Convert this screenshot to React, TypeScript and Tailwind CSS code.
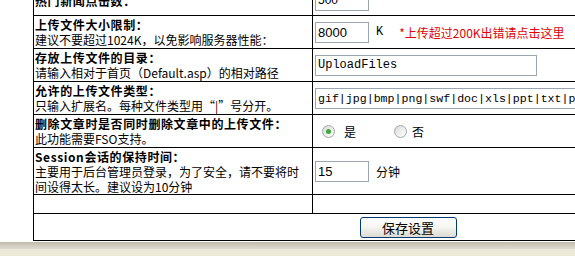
import React from "react";

const cjk = { fontFamily: '"Noto Sans CJK SC", "Liberation Sans", sans-serif' };
const mono = { fontFamily: '"Liberation Mono", "Noto Sans CJK SC", monospace' };
const sans = { fontFamily: '"Liberation Sans", "Noto Sans CJK SC", sans-serif' };

interface RowProps {
  title: string;
  desc?: React.ReactNode;
  height: string;
  children?: React.ReactNode;
  extra?: string;
}

const Row = ({ title, desc, height, children, extra = "" }: RowProps) => (
  <div className={`flex border-b border-black ${height} ${extra}`}>
    <div className="w-[279px] shrink-0 border-r border-black pl-[1px] flex flex-col justify-center whitespace-nowrap">
      {title && <div className="font-bold tracking-[0.6px]">{title}</div>}
      {desc && <div>{desc}</div>}
    </div>
    <div className="flex-1 pl-[2px] flex items-center">{children}</div>
  </div>
);

const TextBox = ({ value, w, font }: { value: string; w: string; font: React.CSSProperties }) => (
  <div
    className={`${w} h-[21px] shrink-0 border border-[#9aa7b2] bg-white pl-[2px] flex items-center overflow-hidden whitespace-nowrap text-black`}
    style={font}
  >
    {value}
  </div>
);

const Radio = ({ checked }: { checked?: boolean }) => (
  <span className="w-[13px] h-[13px] rounded-full border border-[#9ba6b0] bg-gradient-to-br from-[#dcdcd6] to-white flex items-center justify-center shrink-0">
    {checked && <span className="w-[5px] h-[5px] rounded-full bg-[#3ca93c]" />}
  </span>
);

export default function App() {
  return (
    <div className="w-[575px] h-[256px] overflow-hidden bg-white flex flex-col text-[12px] leading-[15px] text-black" style={cjk}>
      <div className="h-[242px] overflow-hidden shrink-0">
        <div className="ml-[33px] mt-[-14px] w-[749px] border-l border-black">
          <Row title="热门新闻点击数：" height="h-[30px]">
            <TextBox value="500" w="w-[54px]" font={sans} />
          </Row>
          <Row title="上传文件大小限制：" desc="建议不要超过1024K，以免影响服务器性能：" height="h-[33px]">
            <TextBox value="8000" w="w-[54px]" font={{ ...sans, fontSize: 13 }} />
            <span className="ml-[7px]" style={mono}>K</span>
            <span className="ml-[16px] text-[#e00000]">*上传超过200K出错请点击这里</span>
          </Row>
          <Row title="存放上传文件的目录：" desc="请输入相对于首页（Default.asp）的相对路径" height="h-[33px]">
            <TextBox value="UploadFiles" w="w-[222px]" font={mono} />
          </Row>
          <Row title="允许的上传文件类型：" desc="只输入扩展名。每种文件类型用“|”号分开。" height="h-[33px]">
            <TextBox value="gif|jpg|bmp|png|swf|doc|xls|ppt|txt|pdf|zip|rar" w="w-[440px]" font={{ ...mono, fontSize: 11.6 }} />
          </Row>
          <Row title="删除文章时是否同时删除文章中的上传文件：" desc="此功能需要FSO支持。" height="h-[33px]">
            <div className="flex items-center ml-[7px]">
              <Radio checked />
              <span className="ml-[9px]">是</span>
              <span className="ml-[38px]">
                <Radio />
              </span>
              <span className="ml-[5px]">否</span>
            </div>
          </Row>
          <Row
            title="Session会话的保持时间："
            desc={
              <>
                主要用于后台管理员登录，为了安全，请不要将时
                <br />
                间设得太长。建议设为10分钟
              </>
            }
            height="h-[47px]"
          >
            <TextBox value="15" w="w-[54px]" font={{ ...sans, fontSize: 13 }} />
            <span className="ml-[7px]">分钟</span>
          </Row>
          <Row title="" height="h-[19px]" />
          <div className="h-[27px] border-b border-black flex items-center justify-center">
            <button className="w-[97px] h-[21px] rounded-[3px] border border-[#003c74] bg-gradient-to-b from-white via-[#f4f4f0] to-[#dcdad2] text-[13px] leading-[15px] text-black">
              保存设置
            </button>
          </div>
        </div>
      </div>
      <div className="flex-1 bg-gradient-to-b from-[#bfbcae] via-[#e0ddd0] to-[#ece9d8] to-40%" />
    </div>
  );
}
